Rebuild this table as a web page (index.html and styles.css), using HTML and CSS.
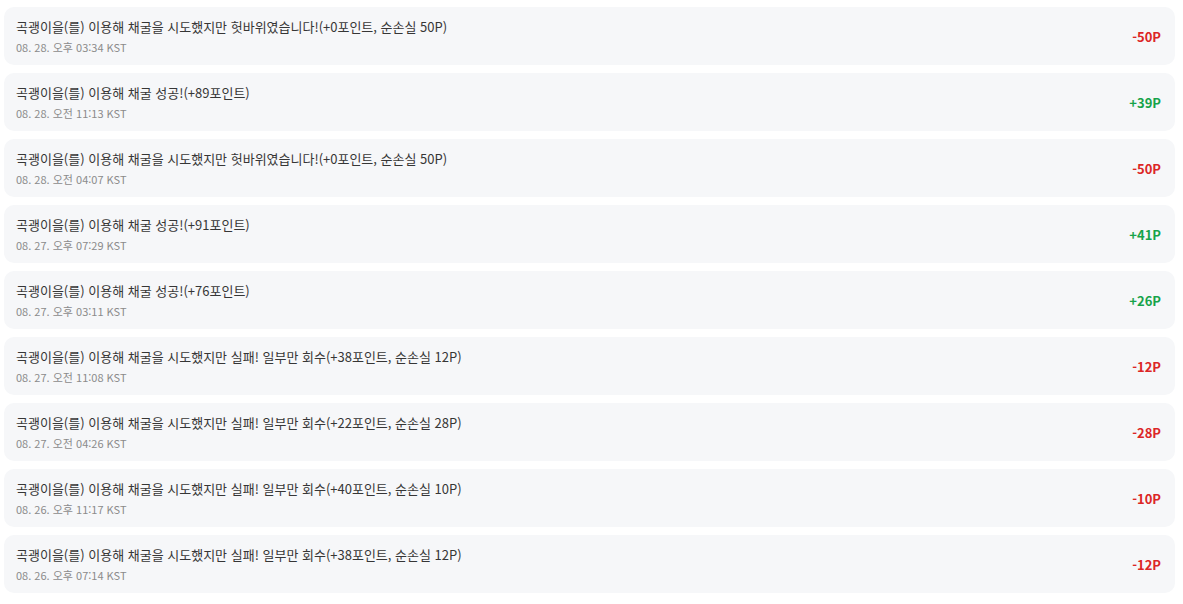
FILE: index.html
```html
<!DOCTYPE html>
<html lang="ko">
<head>
<meta charset="utf-8">
<link rel="stylesheet" href="styles.css">
</head>
<body>
<ul class="log">
  <li class="item"><div class="info"><div class="title">곡괭이을(를) 이용해 채굴을 시도했지만 헛바위였습니다!(+0포인트, 순손실 50P)</div><div class="date">08. 28. 오후 03:34 KST</div></div><div class="amount minus">-50P</div></li>
  <li class="item"><div class="info"><div class="title">곡괭이을(를) 이용해 채굴 성공!(+89포인트)</div><div class="date">08. 28. 오전 11:13 KST</div></div><div class="amount plus">+39P</div></li>
  <li class="item"><div class="info"><div class="title">곡괭이을(를) 이용해 채굴을 시도했지만 헛바위였습니다!(+0포인트, 순손실 50P)</div><div class="date">08. 28. 오전 04:07 KST</div></div><div class="amount minus">-50P</div></li>
  <li class="item"><div class="info"><div class="title">곡괭이을(를) 이용해 채굴 성공!(+91포인트)</div><div class="date">08. 27. 오후 07:29 KST</div></div><div class="amount plus">+41P</div></li>
  <li class="item"><div class="info"><div class="title">곡괭이을(를) 이용해 채굴 성공!(+76포인트)</div><div class="date">08. 27. 오후 03:11 KST</div></div><div class="amount plus">+26P</div></li>
  <li class="item"><div class="info"><div class="title">곡괭이을(를) 이용해 채굴을 시도했지만 실패! 일부만 회수(+38포인트, 순손실 12P)</div><div class="date">08. 27. 오전 11:08 KST</div></div><div class="amount minus">-12P</div></li>
  <li class="item"><div class="info"><div class="title">곡괭이을(를) 이용해 채굴을 시도했지만 실패! 일부만 회수(+22포인트, 순손실 28P)</div><div class="date">08. 27. 오전 04:26 KST</div></div><div class="amount minus">-28P</div></li>
  <li class="item"><div class="info"><div class="title">곡괭이을(를) 이용해 채굴을 시도했지만 실패! 일부만 회수(+40포인트, 순손실 10P)</div><div class="date">08. 26. 오후 11:17 KST</div></div><div class="amount minus">-10P</div></li>
  <li class="item"><div class="info"><div class="title">곡괭이을(를) 이용해 채굴을 시도했지만 실패! 일부만 회수(+38포인트, 순손실 12P)</div><div class="date">08. 26. 오후 07:14 KST</div></div><div class="amount minus">-12P</div></li>
</ul>
</body>
</html>
```
FILE: styles.css
```css
html, body {
  margin: 0;
  padding: 0;
  background: #ffffff;
}
body {
  font-family: "Noto Sans CJK KR", "Noto Sans", sans-serif;
}
.log {
  list-style: none;
  margin: 0;
  padding: 7px 8px 0 4px;
  display: flex;
  flex-direction: column;
  gap: 8px;
}
.item {
  display: flex;
  align-items: center;
  justify-content: space-between;
  background: #f6f7f9;
  border-radius: 10px;
  padding: 10px 14px 10px 12px;
  height: 58px;
  box-sizing: border-box;
}
.info {
  display: flex;
  flex-direction: column;
}
.title {
  font-size: 13px;
  line-height: 20px;
  color: #363636;
}
.date {
  font-size: 11px;
  line-height: 16px;
  margin-top: 2px;
  color: #8b8b8b;
}
.amount {
  font-size: 13px;
  font-weight: 700;
}
.minus { color: #dc2626; }
.plus { color: #16a34a; }
```
